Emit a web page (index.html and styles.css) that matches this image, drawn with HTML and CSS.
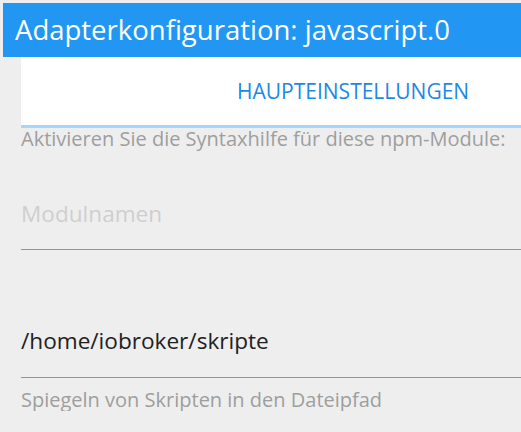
FILE: index.html
```html
<!DOCTYPE html>
<html lang="de">
<head>
<meta charset="utf-8">
<link rel="stylesheet" href="styles.css">
</head>
<body>
<div class="header">Adapterkonfiguration: javascript.0</div>
<div class="main">
  <div class="tabs"><div class="tab">HAUPTEINSTELLUNGEN</div></div>
  <div class="label">Aktivieren Sie die Syntaxhilfe für diese npm-Module:</div>
  <div class="field first"><span class="placeholder">Modulnamen</span></div>
  <div class="field second"><span class="value">/home/iobroker/skripte</span></div>
  <div class="helper">Spiegeln von Skripten in den Dateipfad</div>
</div>
</body>
</html>
```
FILE: styles.css
```css
html, body {
  margin: 0;
  padding: 0;
}
body {
  background: #eeeeee;
  font-family: "Open Sans", "Noto Sans", sans-serif;
  padding-top: 3px;
  overflow: hidden;
}
.header {
  margin-left: 3px;
  height: 54px;
  background: #2196f3;
  color: #ffffff;
  font-size: 27.5px;
  line-height: 54px;
  padding-left: 12px;
  white-space: nowrap;
}
.main {
  margin-left: 21px;
}
.tabs {
  background: #ffffff;
  height: 68px;
  border-bottom: 3px solid #a9d5f8;
  display: flex;
  align-items: center;
}
.tab {
  margin-left: 216px;
  color: #1e88e5;
  font-size: 21px;
  white-space: nowrap;
}
.label {
  color: #9e9e9e;
  font-size: 20px;
  line-height: 22px;
  white-space: nowrap;
}
.field {
  border-bottom: 1px solid #949494;
  font-size: 22.6px;
  line-height: 30px;
}
.field.first {
  padding-top: 49px;
  padding-bottom: 20px;
}
.placeholder {
  color: #cfcfcf;
}
.field.second {
  padding-top: 76px;
  padding-bottom: 21px;
}
.value {
  color: #212121;
}
.helper {
  color: #9e9e9e;
  font-size: 20px;
  line-height: 22px;
  margin-top: 11px;
  white-space: nowrap;
}
```
